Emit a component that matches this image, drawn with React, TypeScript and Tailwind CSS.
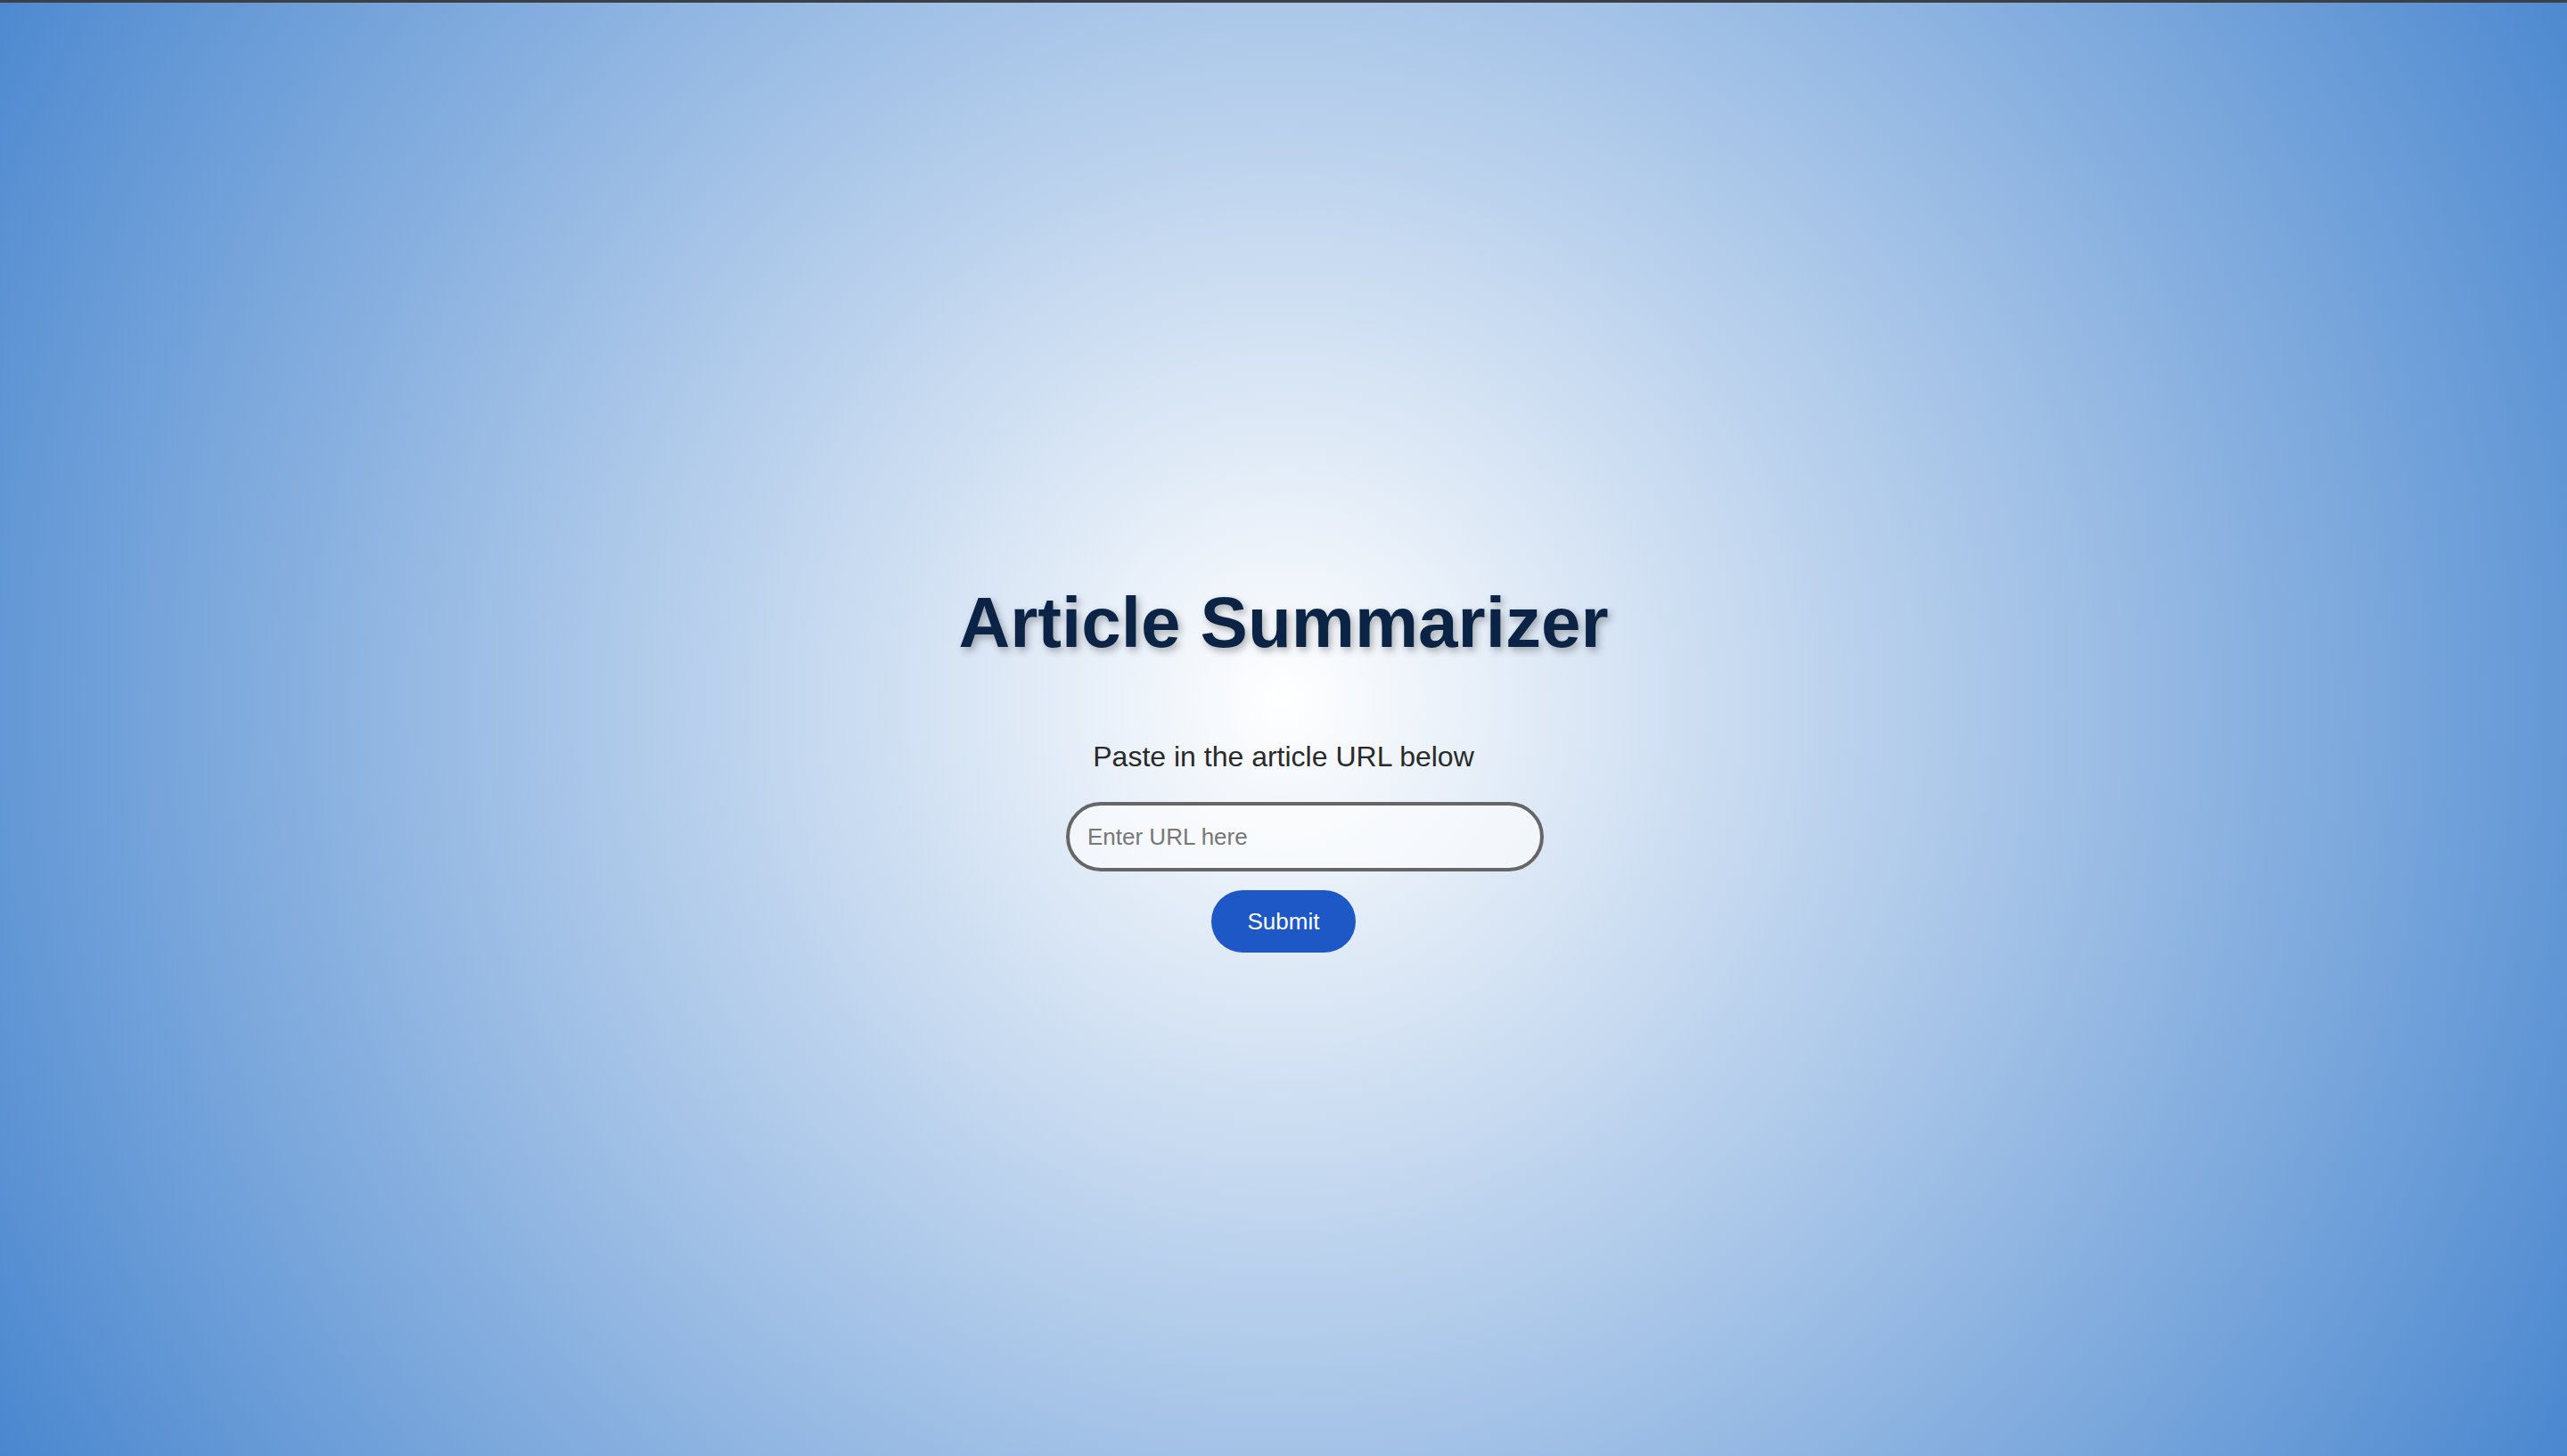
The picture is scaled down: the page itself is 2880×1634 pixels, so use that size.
import React, { useState } from "react";

const App: React.FC = () => {
  const [url, setUrl] = useState<string>("");

  return (
    <div className="min-h-screen border-t-[3px] border-[#3c3f44] bg-[radial-gradient(circle_at_50%_48%,#ffffff,#4a87cf)] font-['Liberation_Sans',Arial,sans-serif]">
      <div className="flex flex-col items-center pt-[650px]">
        {/* Title */}
        <h1 className="text-[80px] font-bold leading-[92px] text-[#0b2344] [text-shadow:3px_4px_8px_rgba(0,0,0,0.3)]">
          Article Summarizer
        </h1>

        <p className="mt-[86px] text-[32px] leading-[37px] text-[#2a2a2a]">
          Paste in the article URL below
        </p>

        {/* Input row */}
        <div className="mt-[32px] flex w-[488px]">
          <input
            type="text"
            value={url}
            onChange={(e) => setUrl(e.target.value)}
            placeholder="Enter URL here"
            className="h-[78px] w-[536px] shrink-0 rounded-full border-4 border-[#666666] bg-white/60 pl-[20px] text-[26px] text-[#222] placeholder:text-[#777777] focus:outline-none"
          />
        </div>

        <button
          type="button"
          className="mt-[21px] h-[70px] w-[162px] rounded-full bg-[#1e58c6] text-[26px] text-white"
        >
          Submit
        </button>
      </div>
    </div>
  );
};

export default App;
